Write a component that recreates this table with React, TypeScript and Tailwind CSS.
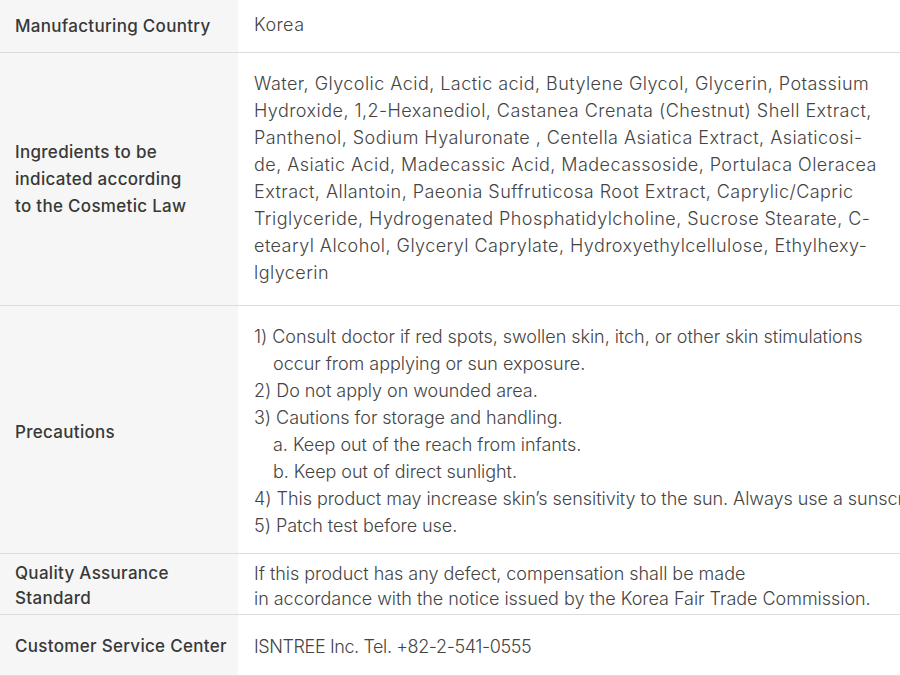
const ingredients = [
  'Water, Glycolic Acid, Lactic acid, Butylene Glycol, Glycerin, Potassium',
  'Hydroxide, 1,2-Hexanediol, Castanea Crenata (Chestnut) Shell Extract,',
  'Panthenol, Sodium Hyaluronate , Centella Asiatica Extract, Asiaticosi-',
  'de, Asiatic Acid, Madecassic Acid, Madecassoside, Portulaca Oleracea',
  'Extract, Allantoin, Paeonia Suffruticosa Root Extract, Caprylic/Capric',
  'Triglyceride, Hydrogenated Phosphatidylcholine, Sucrose Stearate, C-',
  'etearyl Alcohol, Glyceryl Caprylate, Hydroxyethylcellulose, Ethylhexy-',
  'lglycerin',
];

const precautions = [
  { text: '1) Consult doctor if red spots, swollen skin, itch, or other skin stimulations', indent: false },
  { text: 'occur from applying or sun exposure.', indent: true },
  { text: '2) Do not apply on wounded area.', indent: false },
  { text: '3) Cautions for storage and handling.', indent: false },
  { text: 'a. Keep out of the reach from infants.', indent: true },
  { text: 'b. Keep out of direct sunlight.', indent: true },
  { text: '4) This product may increase skin\u2019s sensitivity to the sun. Always use a sunscreen when going outside.', indent: false },
  { text: '5) Patch test before use.', indent: false },
];

const Label = ({ children }: { children: React.ReactNode }) => (
  <div className="w-[238px] shrink-0 bg-[#f6f6f6] pl-[15px] pr-2 flex items-center text-[17px] font-medium tracking-[0.3px] leading-[27px] text-[#383838]">
    {children}
  </div>
);

export default function App() {
  return (
    <div
      className="w-[900px] h-[676px] overflow-hidden bg-white text-[#444] text-[18px] font-light"
      style={{ fontFamily: 'Inter, "Noto Sans", sans-serif' }}
    >
      <div className="flex h-[53px] border-b border-[#dcdcdc]">
        <Label>
          <div className="pt-[1px]">Manufacturing Country</div>
        </Label>
        <div className="flex items-center pl-4 pb-[4px] tracking-[0.45px] whitespace-nowrap">Korea</div>
      </div>

      <div className="flex border-b border-[#dcdcdc]">
        <Label>
          <div>
            Ingredients to be
            <br />
            indicated according
            <br />
            to the Cosmetic Law
          </div>
        </Label>
        <div className="pl-4 pt-[17px] pb-[19px] leading-[27px] tracking-[0.45px] whitespace-nowrap">
          {ingredients.map((line) => (
            <div key={line}>{line}</div>
          ))}
        </div>
      </div>

      <div className="flex border-b border-[#dcdcdc]">
        <Label>
          <div className="pt-[6px]">Precautions</div>
        </Label>
        <div className="pl-4 pt-[17px] pb-[14px] leading-[27px] tracking-[-0.04px] whitespace-nowrap">
          {precautions.map((p) => (
            <div key={p.text} className={p.indent ? 'pl-[19px]' : ''}>
              {p.text}
            </div>
          ))}
        </div>
      </div>

      <div className="flex h-[61px] border-b border-[#dcdcdc]">
        <Label>
          <div className="pt-[3px] leading-[25px]">
            Quality Assurance
            <br />
            Standard
          </div>
        </Label>
        <div className="flex flex-col justify-center pl-4 pt-[4px] leading-[25px] tracking-[-0.03px] whitespace-nowrap">
          <div>If this product has any defect, compensation shall be made</div>
          <div>in accordance with the notice issued by the Korea Fair Trade Commission.</div>
        </div>
      </div>

      <div className="flex h-[61px] border-b border-[#dcdcdc]">
        <Label>
          <div className="pt-[3px]">Customer Service Center</div>
        </Label>
        <div className="flex items-center pl-4 pt-[3px] tracking-[-0.4px] whitespace-nowrap">
          ISNTREE Inc. Tel. +82-2-541-0555
        </div>
      </div>
    </div>
  );
}
